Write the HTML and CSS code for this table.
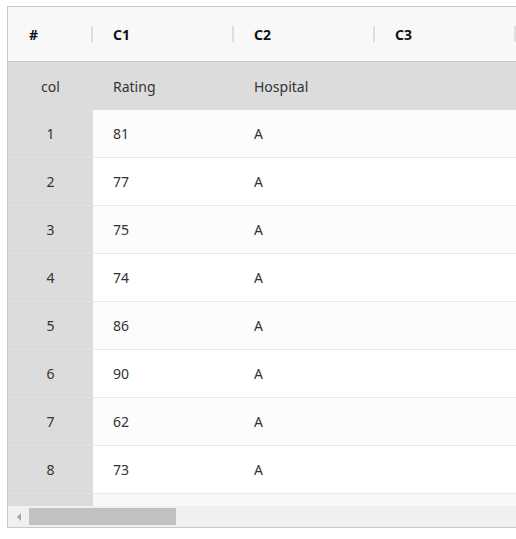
FILE: index.html
```html
<!DOCTYPE html>
<html>
<head>
<title>Grid</title>
<link rel="stylesheet" href="styles.css">
</head>
<body>
<div class="grid">
    <div class="viewport">
        <table class="data">
            <colgroup>
                <col class="index-col">
                <col class="value-col">
                <col class="value-col">
                <col class="value-col">
                <col class="value-col">
            </colgroup>
            <thead>
                <tr class="head">
                    <th class="index">#</th>
                    <th>C1</th>
                    <th>C2</th>
                    <th>C3</th>
                    <th></th>
                </tr>
                <tr class="names">
                    <td class="index">col</td>
                    <td>Rating</td>
                    <td>Hospital</td>
                    <td></td>
                    <td></td>
                </tr>
            </thead>
            <tbody>
                <tr><td class="index">1</td><td>81</td><td>A</td><td></td><td></td></tr>
                <tr><td class="index">2</td><td>77</td><td>A</td><td></td><td></td></tr>
                <tr><td class="index">3</td><td>75</td><td>A</td><td></td><td></td></tr>
                <tr><td class="index">4</td><td>74</td><td>A</td><td></td><td></td></tr>
                <tr><td class="index">5</td><td>86</td><td>A</td><td></td><td></td></tr>
                <tr><td class="index">6</td><td>90</td><td>A</td><td></td><td></td></tr>
                <tr><td class="index">7</td><td>62</td><td>A</td><td></td><td></td></tr>
                <tr><td class="index">8</td><td>73</td><td>A</td><td></td><td></td></tr>
                <tr><td class="index"></td><td></td><td></td><td></td><td></td></tr>
            </tbody>
        </table>
    </div>
    <div class="hscroll">
        <span class="arrow-left"></span>
        <span class="thumb"></span>
    </div>
</div>
</body>
</html>
```

FILE: styles.css
```css
html, body {
    margin: 0;
    padding: 0;
    overflow: hidden;
    background-color: #fff;
}

body {
    font-family: "Noto Sans", "Open Sans", sans-serif;
    font-size: 14px;
    color: #333;
    padding: 6px 0 0 7px;
}

.grid {
    width: 530px;
    border: 1px solid #c8c8c8;
}

.viewport {
    height: 499px;
    overflow: hidden;
}

table.data {
    border-collapse: collapse;
    table-layout: fixed;
    width: 649px;
}

col.index-col {
    width: 85px;
}

col.value-col {
    width: 141px;
}

th, td {
    padding: 0 0 0 20px;
    text-align: left;
    white-space: nowrap;
}

tr.head th {
    height: 54px;
    background-color: #f8f8f8;
    border-bottom: 1px solid #c8c8c8;
    font-weight: bold;
    color: #111;
    position: relative;
}

/* little column divider at the right edge of each header cell */
tr.head th::after {
    content: "";
    position: absolute;
    right: 0;
    top: 19px;
    width: 2px;
    height: 16px;
    background-color: #dedede;
}

tr.head th.index {
    padding-left: 21px;
}

tr.names td {
    height: 48px;
    background-color: #dcdcdc;
}

tbody td {
    height: 47px;
    border-bottom: 1px solid #e8e8e8;
    background-color: #fff;
}

tbody tr:nth-child(odd) td {
    background-color: #fcfcfc;
}

tbody tr:nth-child(9) td {
    background-color: #f8f8f8;
}

td.index,
tbody tr:nth-child(odd) td.index {
    text-align: center;
    padding: 0;
    background-color: #dcdcdc;
    border-bottom-color: #e2e2e2;
}

tr.names td.index {
    padding: 0;
}

.hscroll {
    height: 21px;
    background-color: #f0f0f0;
    display: flex;
    align-items: center;
}

.arrow-left {
    width: 0;
    height: 0;
    margin-left: 9px;
    border-top: 4px solid transparent;
    border-bottom: 4px solid transparent;
    border-right: 4px solid #a3a3a3;
}

.thumb {
    margin-left: 8px;
    width: 147px;
    height: 17px;
    background-color: #c1c1c1;
}
```
